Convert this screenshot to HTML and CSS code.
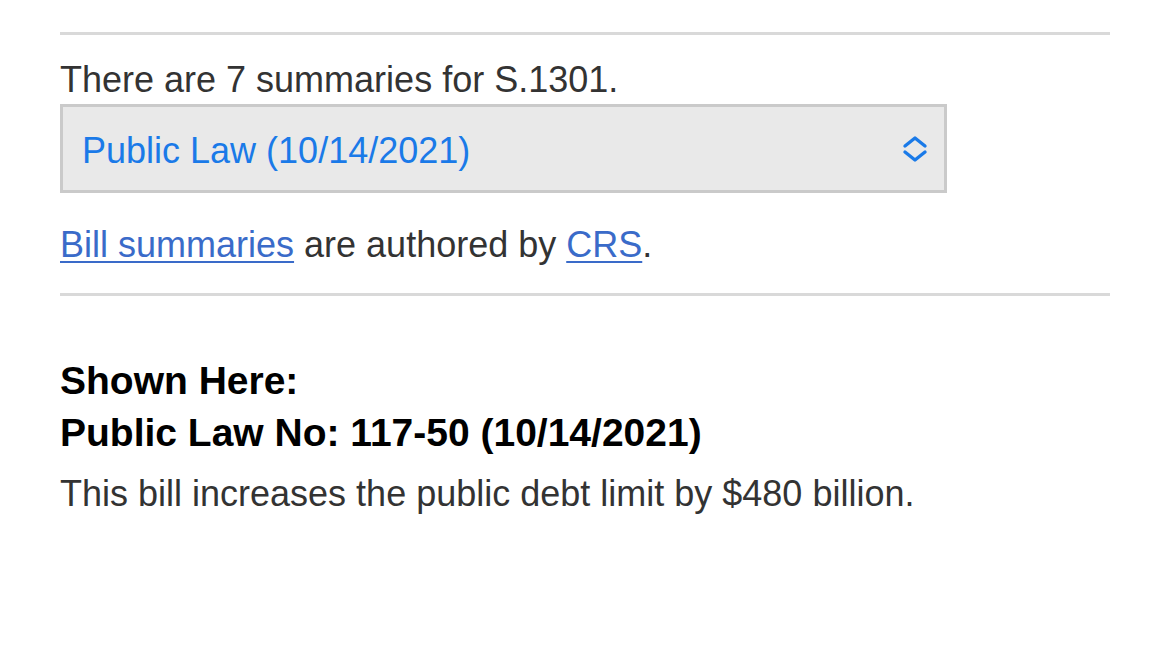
FILE: index.html
```html
<!DOCTYPE html>
<html lang="en">
<head>
<meta charset="utf-8">
<title>S.1301 Summary</title>
<link rel="stylesheet" href="styles.css">
</head>
<body>
<main class="page">
  <div class="rule rule-top"></div>
  <p class="count">There are 7 summaries for S.1301.</p>
  <div class="select">
    <span class="select-value">Public Law (10/14/2021)</span>
    <svg class="select-icon" width="26" height="28" viewBox="0 0 26 28" aria-hidden="true">
      <path d="M3 11 L13 3 L23 11" fill="none" stroke="#1a7ae8" stroke-width="3.4" stroke-linecap="round" stroke-linejoin="round"/>
      <path d="M3 17 L13 25 L23 17" fill="none" stroke="#1a7ae8" stroke-width="3.4" stroke-linecap="round" stroke-linejoin="round"/>
    </svg>
  </div>
  <p class="authored"><a href="#">Bill summaries</a> are authored by <a href="#">CRS</a>.</p>
  <div class="rule rule-mid"></div>
  <h2 class="shown">Shown Here:<br>Public Law No: 117-50 (10/14/2021)</h2>
  <p class="desc">This bill increases the public debt limit by $480 billion.</p>
</main>
</body>
</html>
```

FILE: styles.css
```css
html, body {
  margin: 0;
  padding: 0;
  background: #ffffff;
}

body {
  font-family: "Liberation Sans", Arial, Helvetica, sans-serif;
  font-size: 36px;
  color: #333333;
}

.page {
  padding: 0 60px;
  display: flex;
  flex-direction: column;
}

.rule {
  height: 3px;
  background: #d9d9d9;
}

.rule-top {
  margin-top: 32px;
}

.count {
  margin: 24px 0 0;
  line-height: 42px;
}

.select {
  margin-top: 3px;
  width: 887px;
  height: 89px;
  box-sizing: border-box;
  border: 3px solid #cacaca;
  background: #e9e9e9;
  display: flex;
  align-items: center;
  justify-content: space-between;
  padding: 4px 16px 0 19px;
}

.select-value {
  color: #1a7ae8;
  line-height: 42px;
}

.select-icon {
  display: block;
  margin-top: -3px;
}

.authored {
  margin: 31px 0 0;
  line-height: 42px;
}

.authored a {
  color: #3a6bc9;
  text-decoration: underline;
  text-decoration-thickness: 2px;
  text-underline-offset: 4px;
}

.rule-mid {
  margin-top: 27px;
}

.shown {
  margin: 59px 0 0;
  font-size: 39px;
  font-weight: bold;
  color: #000000;
  line-height: 52px;
}

.desc {
  margin: 14px 0 0;
  line-height: 42px;
}
```
